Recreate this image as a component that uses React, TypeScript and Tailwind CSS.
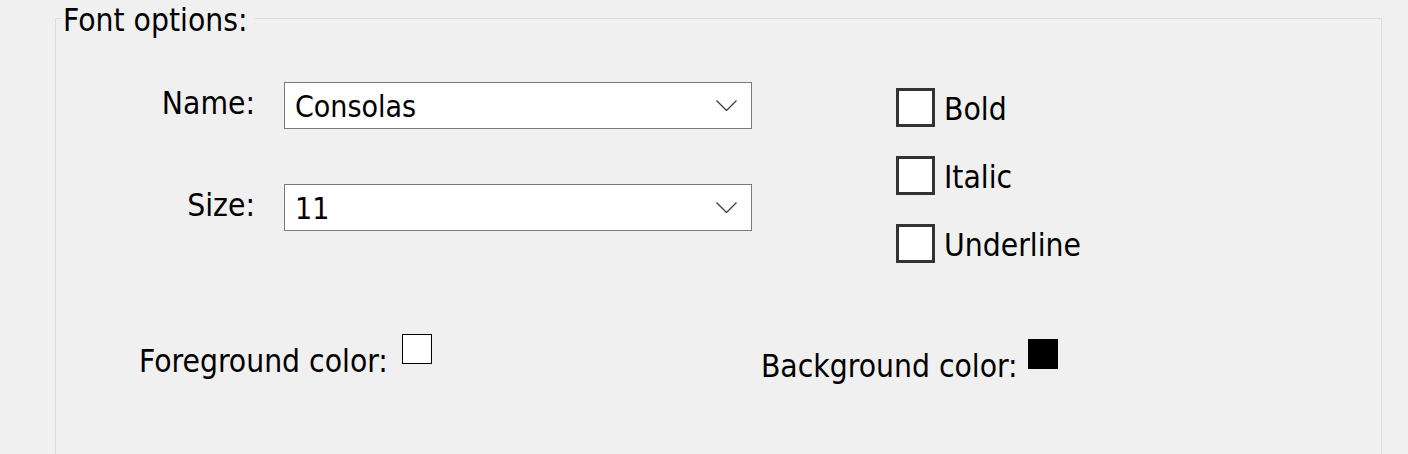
import React from 'react'

const font = "font-['DejaVu_Sans_Condensed','DejaVu_Sans',sans-serif]"

const Chevron = () => (
  <svg width="21" height="11" viewBox="0 0 21 11" fill="none">
    <polyline points="0.5,0.5 10.5,10.5 20.5,0.5" stroke="#3c3c3c" strokeWidth="1.3" />
  </svg>
)

const Combo: React.FC<{ value: string }> = ({ value }) => (
  <div className="flex items-center justify-between w-[468px] h-[47px] border border-[#7a7a7a] bg-white pl-[10px] pr-[14px]">
    <span className="text-[30px] leading-[36px] pt-[2px] text-black">{value}</span>
    <Chevron />
  </div>
)

const Field: React.FC<{ label: string; value: string; className?: string }> = ({ label, value, className }) => (
  <div className={`flex items-center ${className ?? ''}`}>
    <span className="w-[199px] text-right -mt-[5px] mr-[29px]">{label}</span>
    <Combo value={value} />
  </div>
)

const Check: React.FC<{ label: string }> = ({ label }) => (
  <label className="flex items-center gap-[9px]">
    <span className="w-[39px] h-[39px] border-[3px] border-[#333333] bg-white" />
    <span className="mt-[2px]">{label}</span>
  </label>
)

export default function App() {
  return (
    <div className={`h-[454px] w-[1408px] overflow-hidden bg-[#f0f0f0] text-black text-[31.5px] leading-[36px] ${font}`}>
      <fieldset className="ml-[55px] w-[1327px] h-[500px] border border-[#dcdcdc] p-0 m-0">
        <legend className="ml-[7px] pr-[7px] relative top-[2px] leading-[36px]">Font options:</legend>

        <div className="flex items-start">
          <div className="flex flex-col">
            <Field label="Name:" value="Consolas" className="mt-[46px]" />
            <Field label="Size:" value="11" className="mt-[55px]" />
          </div>
          <div className="flex flex-col gap-[29px] ml-[144px] mt-[52px]">
            <Check label="Bold" />
            <Check label="Italic" />
            <Check label="Underline" />
          </div>
        </div>

        <div className="flex items-start mt-[71px]">
          <div className="flex items-start ml-[83px]">
            <span className="mt-[9px]">Foreground color:</span>
            <span className="ml-[14px] w-[30px] h-[30px] border border-black bg-white" />
          </div>
          <div className="flex items-start ml-[329px] mt-[5px]">
            <span className="mt-[9px]">Background color:</span>
            <span className="ml-[10px] w-[30px] h-[30px] bg-black" />
          </div>
        </div>
      </fieldset>
    </div>
  )
}
